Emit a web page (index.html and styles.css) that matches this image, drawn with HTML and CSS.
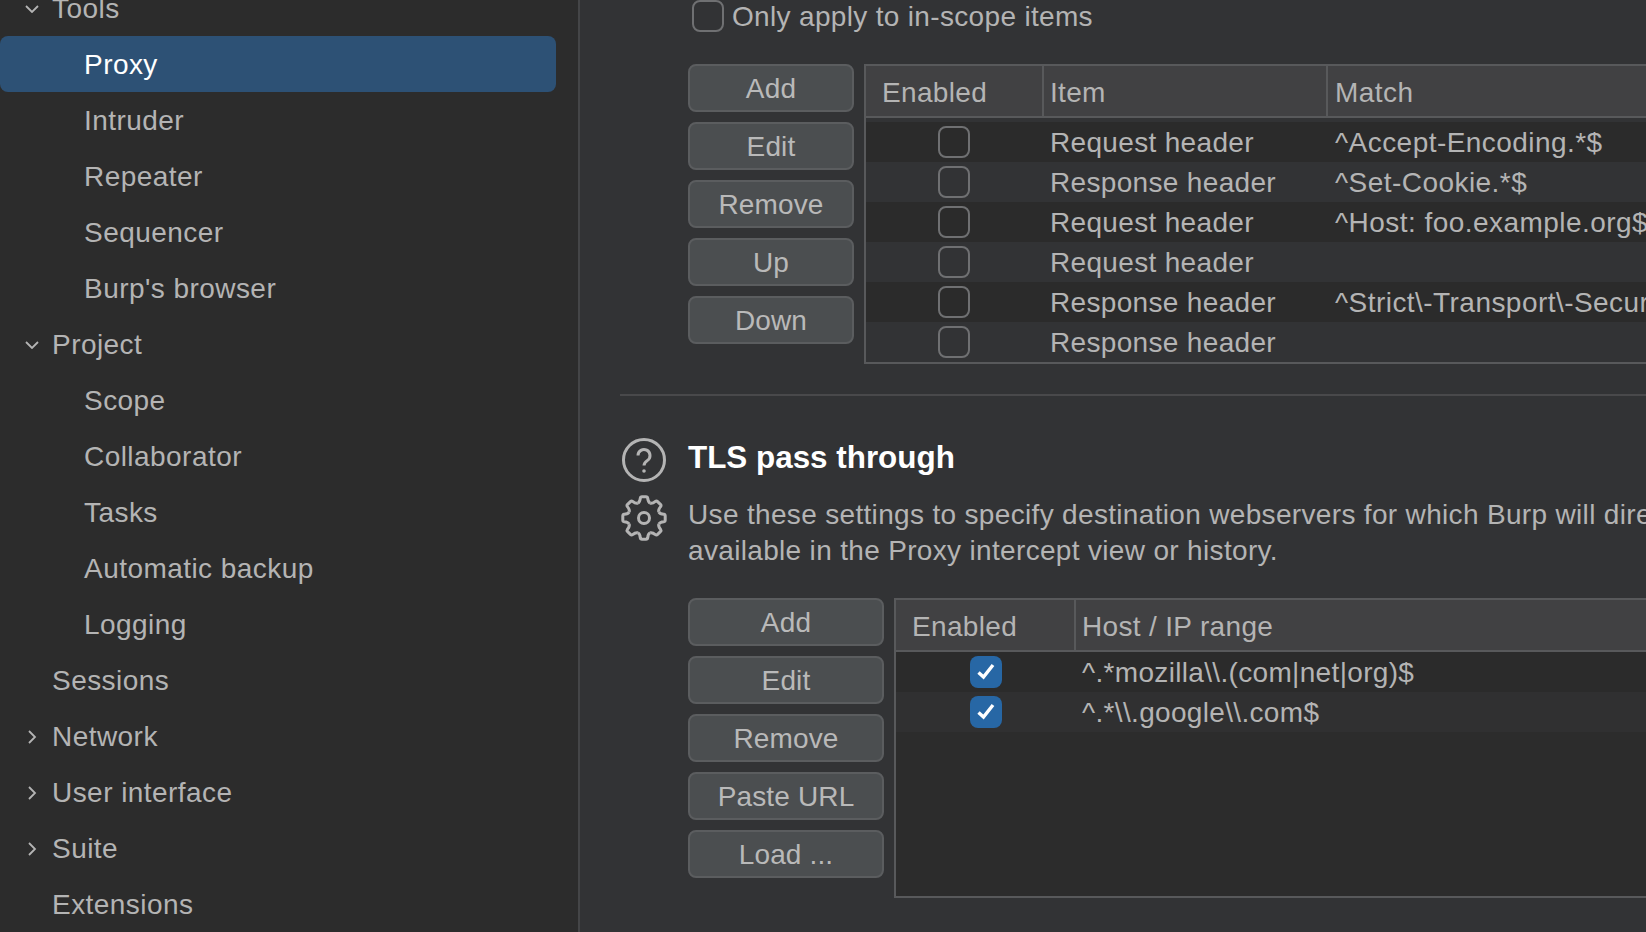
FILE: index.html

```html
<!DOCTYPE html>
<html>
<head lang="en">
    <meta charset="UTF-8">
    <title>Settings</title>
    <link rel="stylesheet" href="styles.css">
</head>

<body>
<div id="contain">
    <div id="side">
        <ul>
            <li class="parent"><svg class="chev" viewBox="0 0 14 8"><path d="M1 1l6 6 6-6"/></svg>Tools</li>
            <li class="child selected">Proxy</li>
            <li class="child">Intruder</li>
            <li class="child">Repeater</li>
            <li class="child">Sequencer</li>
            <li class="child">Burp's browser</li>
            <li class="parent"><svg class="chev" viewBox="0 0 14 8"><path d="M1 1l6 6 6-6"/></svg>Project</li>
            <li class="child">Scope</li>
            <li class="child">Collaborator</li>
            <li class="child">Tasks</li>
            <li class="child">Automatic backup</li>
            <li class="child">Logging</li>
            <li class="plain">Sessions</li>
            <li class="parent"><svg class="chev" viewBox="0 0 14 14"><path d="M4 1l6 6-6 6"/></svg>Network</li>
            <li class="parent"><svg class="chev" viewBox="0 0 14 14"><path d="M4 1l6 6-6 6"/></svg>User interface</li>
            <li class="parent"><svg class="chev" viewBox="0 0 14 14"><path d="M4 1l6 6-6 6"/></svg>Suite</li>
            <li class="plain">Extensions</li>
        </ul>
    </div>

    <div id="main">
        <div class="scope">
            <span class="box"></span>
            <span class="scope-label">Only apply to in-scope items</span>
        </div>

        <div class="panel">
            <div class="buttons">
                <button>Add</button>
                <button>Edit</button>
                <button>Remove</button>
                <button>Up</button>
                <button>Down</button>
            </div>
            <div class="table rules">
                <div class="head">
                    <div>Enabled</div>
                    <div>Item</div>
                    <div>Match</div>
                </div>
                <div class="rows">
                    <div class="row"><div class="cell-box"><span class="box"></span></div><div>Request header</div><div>^Accept-Encoding.*$</div></div>
                    <div class="row"><div class="cell-box"><span class="box"></span></div><div>Response header</div><div>^Set-Cookie.*$</div></div>
                    <div class="row"><div class="cell-box"><span class="box"></span></div><div>Request header</div><div>^Host: foo.example.org$</div></div>
                    <div class="row"><div class="cell-box"><span class="box"></span></div><div>Request header</div><div></div></div>
                    <div class="row"><div class="cell-box"><span class="box"></span></div><div>Response header</div><div>^Strict\-Transport\-Security.*$</div></div>
                    <div class="row"><div class="cell-box"><span class="box"></span></div><div>Response header</div><div></div></div>
                </div>
            </div>
        </div>

        <div class="line"></div>

        <div class="section">
            <div class="icons">
                <svg class="help" viewBox="0 0 44 44">
                    <circle cx="22" cy="22" r="20.5"/>
                    <path d="M16 17.5a6 6 0 1 1 9.5 4.9c-2 1.4-3.5 2.6-3.5 5.1"/>
                    <circle class="dot" cx="22" cy="33" r="1.8"/>
                </svg>
                <svg class="gear" viewBox="0 0 48 48">
                    <defs>
                        <path id="tooth" d="M17.9 9.2Q20 8 20.3 4.2Q20.5 2.8 22 2.8H26Q27.5 2.8 27.7 4.2Q28 8 30.1 9.2"/>
                    </defs>
                    <use href="#tooth"/>
                    <use href="#tooth" transform="rotate(45 24 24)"/>
                    <use href="#tooth" transform="rotate(90 24 24)"/>
                    <use href="#tooth" transform="rotate(135 24 24)"/>
                    <use href="#tooth" transform="rotate(180 24 24)"/>
                    <use href="#tooth" transform="rotate(225 24 24)"/>
                    <use href="#tooth" transform="rotate(270 24 24)"/>
                    <use href="#tooth" transform="rotate(315 24 24)"/>
                    <circle cx="24" cy="24" r="5.5"/>
                </svg>
            </div>
            <div class="text">
                <h2>TLS pass through</h2>
                <p>Use these settings to specify destination webservers for which Burp will directly pass through TLS connections. No details about requests or responses made via these connections will be</p>
                <p>available in the Proxy intercept view or history.</p>
            </div>
        </div>

        <div class="panel">
            <div class="buttons wide">
                <button>Add</button>
                <button>Edit</button>
                <button>Remove</button>
                <button>Paste URL</button>
                <button>Load ...</button>
            </div>
            <div class="table hosts">
                <div class="head">
                    <div>Enabled</div>
                    <div>Host / IP range</div>
                </div>
                <div class="rows">
                    <div class="row"><div class="cell-box"><span class="box checked"><svg viewBox="0 0 32 32"><path d="M8.5 16.5l5 4.5 9.5-12"/></svg></span></div><div>^.*mozilla\\.(com|net|org)$</div></div>
                    <div class="row"><div class="cell-box"><span class="box checked"><svg viewBox="0 0 32 32"><path d="M8.5 16.5l5 4.5 9.5-12"/></svg></span></div><div>^.*\\.google\\.com$</div></div>
                </div>
            </div>
        </div>
    </div>
</div>
</body>
</html>
```

FILE: styles.css

```css
*{
    padding: 0;
    margin: 0;
    box-sizing: border-box;
}
html, body{
    height: 100%;
    overflow: hidden;
}
body{
    font-family: "Liberation Sans", Arial, sans-serif;
    font-size: 28px;
    letter-spacing: 0.33px;
    color: #b4b4b4;
    background-color: #323335;
}
ul{
    list-style: none;
}
#contain{
    display: flex;
    height: 932px;
    overflow: hidden;
}

/* left tree */
#side{
    flex: none;
    width: 580px;
    height: 932px;
    overflow: hidden;
    background-color: #2c2c2c;
    border-right: 2px solid #444547;
}
#side ul{
    margin-top: -20px;
    width: 556px;
}
#side li{
    display: flex;
    align-items: center;
    height: 56px;
    padding-top: 1px;
    letter-spacing: 0.45px;
    white-space: nowrap;
}
#side .child{
    padding-left: 84px;
}
#side .plain{
    padding-left: 52px;
}
#side .parent{
    padding-left: 25px;
    gap: 13px;
}
#side .selected{
    background-color: #2d5175;
    color: #fff;
    border-radius: 8px;
}
.chev{
    flex: none;
    width: 14px;
    height: auto;
    fill: none;
    stroke: #b4b4b4;
    stroke-width: 1.8;
}

/* right side */
#main{
    flex: none;
    width: 1066px;
    height: 932px;
    overflow: hidden;
    padding-left: 40px;
}
.scope{
    display: flex;
    align-items: center;
    gap: 8px;
    height: 32px;
    margin-left: 72px;
    margin-bottom: 32px;
    white-space: nowrap;
}
.scope-label{
    padding-top: 2px;
}
.box{
    display: block;
    flex: none;
    width: 32px;
    height: 32px;
    border: 2px solid #6f7072;
    border-radius: 8px;
}
.box.checked{
    border: 0;
    background-color: #2767a5;
}
.box svg{
    display: block;
    fill: none;
    stroke: #fff;
    stroke-width: 3.4;
}
.panel{
    display: flex;
    margin-left: 68px;
    gap: 10px;
}
.buttons{
    display: flex;
    flex-direction: column;
    flex: none;
    gap: 10px;
    width: 166px;
}
.buttons.wide{
    width: 196px;
}
button{
    height: 48px;
    padding-top: 2px;
    font-family: inherit;
    font-size: 28px;
    letter-spacing: 0.15px;
    color: #b9b9b9;
    background-color: #4b4e50;
    border: 2px solid #5b5d5f;
    border-radius: 8px;
}

/* tables */
.table{
    flex: none;
    width: 1000px;
    height: 300px;
    background-color: #2c2c2c;
    border: 2px solid #58595b;
    white-space: nowrap;
}
.rules{
    background-color: #323335;
}
.head{
    display: grid;
    height: 52px;
    background-color: #414143;
    border-bottom: 2px solid #58595b;
}
.head div{
    display: flex;
    align-items: center;
    padding-top: 3px;
    padding-left: 6px;
    border-right: 2px solid #58595b;
}
.head div:first-child{
    padding-left: 16px;
}
.rules .head, .rules .row{
    grid-template-columns: 178px 284px 1fr;
}
.hosts .head, .hosts .row{
    grid-template-columns: 180px 1fr;
}
.rules .rows{
    margin-top: 4px;
}
.row{
    display: grid;
    height: 40px;
    align-items: center;
    background-color: #303031;
}
.rules .row{
    background-color: #323335;
}
.rules .row:nth-child(odd), .hosts .row:nth-child(odd){
    background-color: #2b2b2b;
}
.row div{
    padding-top: 2px;
    padding-left: 6px;
}
.rules .head div:nth-child(3), .rules .row div:nth-child(3){
    padding-left: 7px;
    letter-spacing: 0.45px;
}
.row .cell-box{
    display: flex;
    justify-content: center;
    padding-top: 0;
    padding-left: 0;
}
.rules .cell-box{
    padding-right: 2px;
}

.line{
    height: 2px;
    margin-top: 30px;
    margin-bottom: 41px;
    background-color: #49494b;
}
.section{
    display: flex;
    height: 132px;
    margin-bottom: 29px;
}
.icons{
    display: flex;
    flex-direction: column;
    flex: none;
    align-items: center;
    width: 48px;
    margin-right: 20px;
    margin-top: 1px;
    gap: 12px;
}
.help{
    width: 44px;
    height: 44px;
    fill: none;
    stroke: #b4b4b4;
    stroke-width: 3;
}
.help .dot{
    fill: #b4b4b4;
    stroke: none;
}
.gear{
    width: 48px;
    height: 48px;
    fill: none;
    stroke: #b4b4b4;
    stroke-width: 3;
    stroke-linejoin: round;
}
.text{
    white-space: nowrap;
}
h2{
    height: 40px;
    margin-bottom: 20px;
    padding-top: 1px;
    font-size: 31.4px;
    letter-spacing: 0;
    line-height: 40px;
    color: #fff;
}
p{
    height: 36px;
    line-height: 36px;
}
```
